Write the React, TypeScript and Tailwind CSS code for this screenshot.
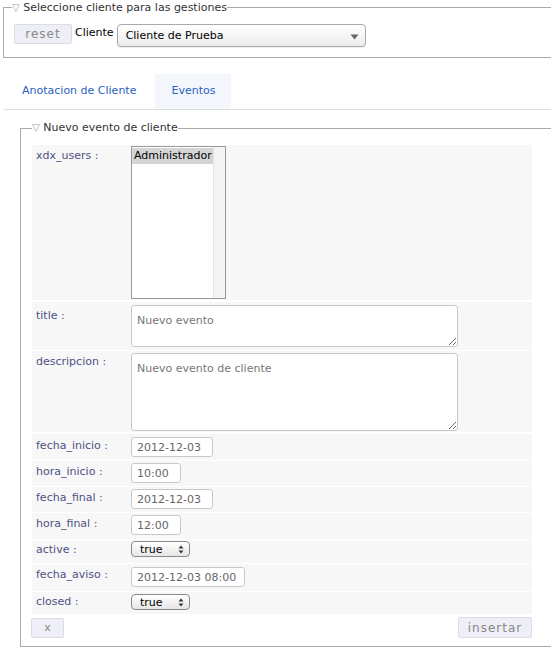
import React from "react";

const F = { fontFamily: '"DejaVu Sans", Verdana, sans-serif' };

function TinySelect() {
  return (
    <div className="relative flex h-[16px] w-[59px] items-center rounded-[4px] border border-[#8a8a8a] bg-gradient-to-b from-white to-[#e6e6e6] pl-[8px] text-[11px] leading-none text-black">
      <span>true</span>
      <svg className="absolute right-[5px] top-[3px]" width="6" height="9" viewBox="0 0 6 9">
        <path d="M3 0.5 L5.5 3.5 H0.5 Z" fill="#333" />
        <path d="M3 8.5 L5.5 5.5 H0.5 Z" fill="#333" />
      </svg>
    </div>
  );
}

function Label({ children, pt = "pt-[4px]" }: { children: React.ReactNode; pt?: string }) {
  return (
    <div className={`w-[99px] shrink-0 pl-[4px] text-[11px] leading-[14px] text-[#4f5183] ${pt}`}>{children}</div>
  );
}

function TextInput({ value, w }: { value: string; w: string }) {
  return (
    <input
      readOnly
      defaultValue={value}
      className={`${w} h-[20px] rounded-[3px] border border-[#c8c8c8] bg-white px-[5px] text-[11px] text-[#666] outline-none`}
      style={F}
    />
  );
}

export default function App() {
  return (
    <div className="w-[551px] overflow-hidden bg-white text-[11px] text-[#333]" style={F}>
      {/* Top fieldset */}
      <fieldset className="ml-[3px] mt-[1px] w-[570px] border border-[#aaa] pb-[10px] pl-[10px] pt-[10px]">
        <legend className="-ml-[2px] px-0 text-[11px] leading-[13px] text-[#333]">
          <span className="text-[10px] text-[#999]">▽</span> Seleccione cliente para las gestiones
        </legend>
        <div className="flex items-center">
          <button className="mt-[-3px] h-[20px] w-[58px] rounded-[2px] border border-[#dcdce6] bg-[#eeeef6] text-[12px] tracking-[1px] text-[#888]">
            reset
          </button>
          <span className="ml-[3px] mt-[-5px] text-[11px] text-black">Cliente</span>
          <div className="relative ml-[3px] flex h-[23px] w-[249px] items-center rounded-[4px] border border-[#a8a8a8] bg-gradient-to-b from-white to-[#ebebeb] pl-[8px] pt-[2px] text-[11px] text-black shadow-[0_1px_1px_rgba(0,0,0,0.08)]">
            Cliente de Prueba
            <svg className="absolute right-[6px] top-[9px]" width="9" height="6" viewBox="0 0 9 6">
              <path d="M0.5 0.5 H8.5 L4.5 5.5 Z" fill="#666" />
            </svg>
          </div>
        </div>
      </fieldset>

      {/* Tabs */}
      <div className="ml-[4px] mt-[16px] flex gap-[3px] border-b border-[#dedede] pl-[2px]">
        <div className="flex h-[35px] items-center px-[16px] text-[11px] text-[#2a5fc4]">Anotacion de Cliente</div>
        <div className="flex h-[35px] items-center bg-[#f3f6fb] px-[16px] text-[11px] text-[#2a5fc4]">Eventos</div>
      </div>

      {/* Second fieldset */}
      <fieldset className="ml-[20px] mt-[11px] w-[560px] border border-[#aaa] pb-[8px] pl-[11px] pt-[10px]">
        <legend className="px-0 text-[11px] leading-[14px] text-[#333]">
          <span className="text-[10px] text-[#999]">▽</span> Nuevo evento de cliente
        </legend>
        <div className="flex w-[500px] flex-col gap-[1px]">
          {/* xdx_users */}
          <div className="flex bg-[#f7f7f7] py-[1px]">
            <Label pt="pt-[3px]">xdx_users :</Label>
            <div className="flex h-[153px] w-[95px] border border-[#999] bg-white">
              <div className="flex-1">
                <div className="mt-[1px] bg-[#d4d4d4] pl-[2px] text-[11px] leading-[16px] text-black">Administrador</div>
              </div>
              <div className="w-[12px] border-l border-[#e4e4e4] bg-[#f3f3f3]" />
            </div>
          </div>
          {/* title */}
          <div className="mt-[1px] flex bg-[#f7f7f7] pb-[3px] pt-[3px]">
            <Label pt="pt-[4px]">title :</Label>
            <textarea
              readOnly
              defaultValue="Nuevo evento"
              className="h-[42px] w-[327px] resize rounded-[3px] border border-[#c8c8c8] bg-white px-[5px] pt-[8px] text-[11px] leading-[14px] text-[#777] outline-none"
              style={F}
            />
          </div>
          {/* descripcion */}
          <div className="flex bg-[#f7f7f7] pb-[1px] pt-[2px]">
            <Label pt="pt-[2px]">descripcion :</Label>
            <textarea
              readOnly
              defaultValue="Nuevo evento de cliente"
              className="h-[78px] w-[327px] resize rounded-[3px] border border-[#c8c8c8] bg-white px-[5px] pt-[8px] text-[11px] leading-[14px] text-[#777] outline-none"
              style={F}
            />
          </div>
          <div className="mt-[1px] flex bg-[#f7f7f7] pb-[3px] pt-[3px]">
            <Label pt="pt-[2px]">fecha_inicio :</Label>
            <TextInput value="2012-12-03" w="w-[82px]" />
          </div>
          <div className="flex bg-[#f7f7f7] pb-[3px] pt-[2px]">
            <Label pt="pt-[2px]">hora_inicio :</Label>
            <TextInput value="10:00" w="w-[50px]" />
          </div>
          <div className="flex bg-[#f7f7f7] pb-[3px] pt-[2px]">
            <Label pt="pt-[2px]">fecha_final :</Label>
            <TextInput value="2012-12-03" w="w-[82px]" />
          </div>
          <div className="flex bg-[#f7f7f7] pb-[4px] pt-[2px]">
            <Label pt="pt-[2px]">hora_final :</Label>
            <TextInput value="12:00" w="w-[50px]" />
          </div>
          <div className="flex bg-[#f7f7f7] pb-[6px] pt-[1px]">
            <Label pt="pt-[2px]">active :</Label>
            <TinySelect />
          </div>
          <div className="flex bg-[#f7f7f7] pb-[4px] pt-[3px]">
            <Label pt="pt-[1px]">fecha_aviso :</Label>
            <TextInput value="2012-12-03 08:00" w="w-[114px]" />
          </div>
          <div className="flex bg-[#f7f7f7] pb-[4px] pt-[2px]">
            <Label pt="pt-[1px]">closed :</Label>
            <TinySelect />
          </div>
          <div className="mt-[2px] flex items-start justify-between">
            <button className="-ml-[1px] mt-[1px] h-[20px] w-[33px] rounded-[2px] border border-[#dcdce6] bg-[#eeeef6] text-[11px] text-[#888]">
              x
            </button>
            <button className="h-[21px] w-[74px] rounded-[2px] border border-[#dcdce6] bg-[#eeeef6] text-[12px] tracking-[1px] text-[#888]">
              insertar
            </button>
          </div>
        </div>
      </fieldset>
    </div>
  );
}
